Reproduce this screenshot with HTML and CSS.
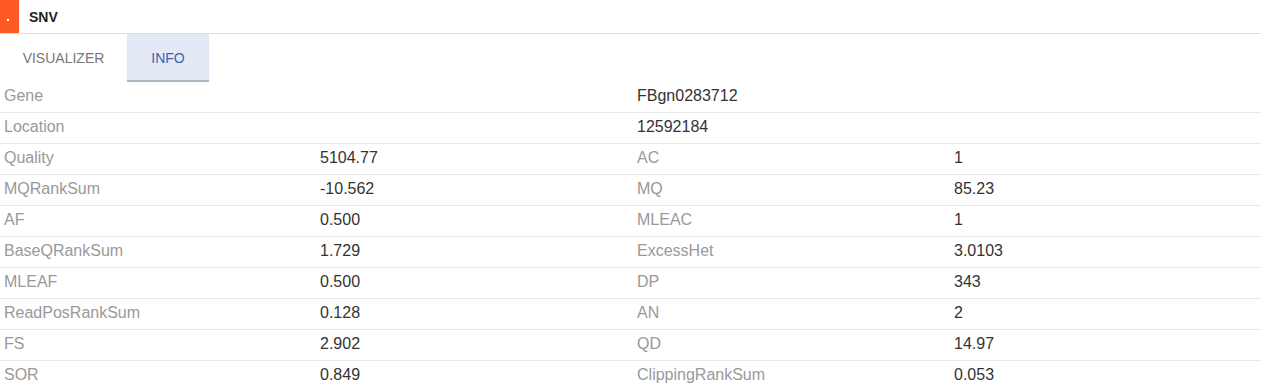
FILE: index.html
```html
<!DOCTYPE html>
<html lang="en">
<head>
  <meta charset="UTF-8">
  <title>SNV - Info</title>
  <link rel="stylesheet" href="styles.css">
</head>
<body>
  <header class="panel-head">
    <div class="panel-toggle"><span class="dot"></span></div>
    <h1>SNV</h1>
  </header>

  <nav class="tabs">
    <div class="tab">VISUALIZER</div>
    <div class="tab active">INFO</div>
  </nav>

  <table class="info">
    <colgroup>
      <col class="c1"><col class="c2"><col class="c3"><col class="c4">
    </colgroup>
    <tbody>
      <tr><td class="key" colspan="2">Gene</td><td class="val" colspan="2">FBgn0283712</td></tr>
      <tr><td class="key" colspan="2">Location</td><td class="val" colspan="2">12592184</td></tr>
      <tr><td class="key">Quality</td><td class="val">5104.77</td><td class="key">AC</td><td class="val">1</td></tr>
      <tr><td class="key">MQRankSum</td><td class="val">-10.562</td><td class="key">MQ</td><td class="val">85.23</td></tr>
      <tr><td class="key">AF</td><td class="val">0.500</td><td class="key">MLEAC</td><td class="val">1</td></tr>
      <tr><td class="key">BaseQRankSum</td><td class="val">1.729</td><td class="key">ExcessHet</td><td class="val">3.0103</td></tr>
      <tr><td class="key">MLEAF</td><td class="val">0.500</td><td class="key">DP</td><td class="val">343</td></tr>
      <tr><td class="key">ReadPosRankSum</td><td class="val">0.128</td><td class="key">AN</td><td class="val">2</td></tr>
      <tr><td class="key">FS</td><td class="val">2.902</td><td class="key">QD</td><td class="val">14.97</td></tr>
      <tr><td class="key">SOR</td><td class="val">0.849</td><td class="key">ClippingRankSum</td><td class="val">0.053</td></tr>
    </tbody>
  </table>
</body>
</html>
```

FILE: styles.css
```css
/* Base */
body {
  margin: 0;
  font-family: 'Liberation Sans', Arial, sans-serif;
  background: #fff;
  color: #333;
}

/* Panel header */
.panel-head {
  display: flex;
  align-items: center;
  height: 33px;
  border-bottom: 1px solid #dedede;
}
.panel-toggle {
  width: 19px;
  height: 33px;
  background: #ff5a26;
  position: relative;
}
.panel-toggle .dot {
  position: absolute;
  left: 7px;
  top: 19px;
  width: 2px;
  height: 2px;
  background: #fff;
}
.panel-head h1 {
  margin: 0 0 0 10px;
  font-size: 14px;
  font-weight: bold;
  color: #222;
}

/* Tabs */
.tabs {
  display: flex;
  height: 48px;
}
.tab {
  display: flex;
  align-items: center;
  justify-content: center;
  box-sizing: border-box;
  width: 127px;
  padding-top: 2px;
  font-size: 14px;
  color: #777;
  border-bottom: 2px solid transparent;
}
.tab.active {
  width: 82px;
  background: #e3eaf5;
  color: #3b64ae;
  border-bottom-color: #aab8c4;
}

/* Info table */
.info {
  width: 100%;
  border-collapse: collapse;
  table-layout: fixed;
  font-size: 16px;
}
.info col.c1 { width: 316px; }
.info col.c2 { width: 317px; }
.info col.c3 { width: 317px; }
.info td {
  height: 27px;
  padding: 0 4px 3px;
  border-bottom: 1px solid #e8e8e8;
  white-space: nowrap;
}
.info td.key { color: #999; }
.info td.val { color: #333; }
```
